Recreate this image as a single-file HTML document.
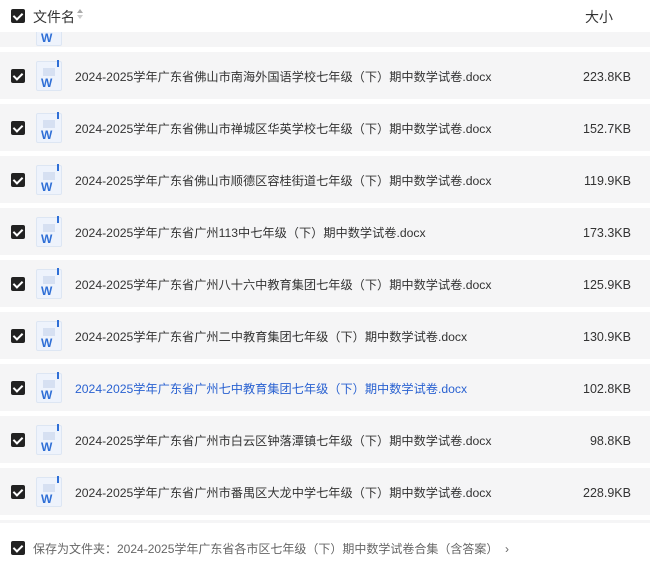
<!DOCTYPE html>
<html><head><meta charset="utf-8"><style>
*{margin:0;padding:0;box-sizing:border-box}
body{width:650px;height:566px;background:#fff;font-family:"Liberation Sans","Noto Sans CJK SC",sans-serif;position:relative;overflow:hidden;color:#333}
.cb{position:absolute;left:11px;width:14px;height:14px;background:#222;border-radius:2px}
.cb:after{content:"";position:absolute;left:4px;top:2px;width:4px;height:7px;border:solid #fff;border-width:0 2px 2px 0;transform:rotate(45deg)}
.row{position:absolute;left:0;width:650px;height:47px;background:#f5f5f6}
.row .cb{top:17px}
.ic{position:absolute;left:36px;top:9px;width:26px;height:30px;background:#eef3fc;border:1px solid #dde6f3;border-radius:2px}
.ic:before{content:"";position:absolute;left:6px;top:6px;width:12px;height:8px;background:#d6e0f2}
.ic:after{content:"";position:absolute;right:2px;top:-2px;width:2px;height:7px;background:#2f6fd6}
.ic b{position:absolute;left:4px;top:14px;font:bold 12px "Liberation Sans",sans-serif;color:#2f6fd6}
.nm{position:absolute;left:75px;top:17px;font-size:12.2px;line-height:17px;white-space:nowrap}
.sz{position:absolute;right:19px;top:17px;font-size:12.5px;line-height:17px}
.blue{color:#2a62d1}
</style></head><body>
<div class="cb" style="top:9px"></div>
<div style="position:absolute;left:33px;top:7px;font-size:14px;color:#333">文件名</div>
<div style="position:absolute;left:77px;top:9px;width:0;height:0;border:3px solid transparent;border-bottom:4px solid #aaa;border-top:0"></div>
<div style="position:absolute;left:77px;top:15px;width:0;height:0;border:3px solid transparent;border-top:4px solid #ccc;border-bottom:0"></div>
<div style="position:absolute;left:585px;top:7px;font-size:14px">大小</div>
<div class="row" style="top:32px;height:15px;overflow:hidden"><div class="ic" style="top:-16px"><b>W</b></div></div>

<div class="row" style="top:52px"><div class="cb"></div><div class="ic"><b>W</b></div><div class="nm">2024-2025学年广东省佛山市南海外国语学校七年级（下）期中数学试卷.docx</div><div class="sz">223.8KB</div></div>
<div class="row" style="top:104px"><div class="cb"></div><div class="ic"><b>W</b></div><div class="nm">2024-2025学年广东省佛山市禅城区华英学校七年级（下）期中数学试卷.docx</div><div class="sz">152.7KB</div></div>
<div class="row" style="top:156px"><div class="cb"></div><div class="ic"><b>W</b></div><div class="nm">2024-2025学年广东省佛山市顺德区容桂街道七年级（下）期中数学试卷.docx</div><div class="sz">119.9KB</div></div>
<div class="row" style="top:208px"><div class="cb"></div><div class="ic"><b>W</b></div><div class="nm">2024-2025学年广东省广州113中七年级（下）期中数学试卷.docx</div><div class="sz">173.3KB</div></div>
<div class="row" style="top:260px"><div class="cb"></div><div class="ic"><b>W</b></div><div class="nm">2024-2025学年广东省广州八十六中教育集团七年级（下）期中数学试卷.docx</div><div class="sz">125.9KB</div></div>
<div class="row" style="top:312px"><div class="cb"></div><div class="ic"><b>W</b></div><div class="nm">2024-2025学年广东省广州二中教育集团七年级（下）期中数学试卷.docx</div><div class="sz">130.9KB</div></div>
<div class="row" style="top:364px"><div class="cb"></div><div class="ic"><b>W</b></div><div class="nm blue">2024-2025学年广东省广州七中教育集团七年级（下）期中数学试卷.docx</div><div class="sz">102.8KB</div></div>
<div class="row" style="top:416px"><div class="cb"></div><div class="ic"><b>W</b></div><div class="nm">2024-2025学年广东省广州市白云区钟落潭镇七年级（下）期中数学试卷.docx</div><div class="sz">98.8KB</div></div>
<div class="row" style="top:468px"><div class="cb"></div><div class="ic"><b>W</b></div><div class="nm">2024-2025学年广东省广州市番禺区大龙中学七年级（下）期中数学试卷.docx</div><div class="sz">228.9KB</div></div>
<div class="row" style="top:520px;height:3px"></div>

<div class="cb" style="top:541px"></div>
<div style="position:absolute;left:33px;top:540px;font-size:12px;color:#666;white-space:nowrap">保存为文件夹：2024-2025学年广东省各市区七年级（下）期中数学试卷合集（含答案）&nbsp;&nbsp;›</div>
</body></html>
